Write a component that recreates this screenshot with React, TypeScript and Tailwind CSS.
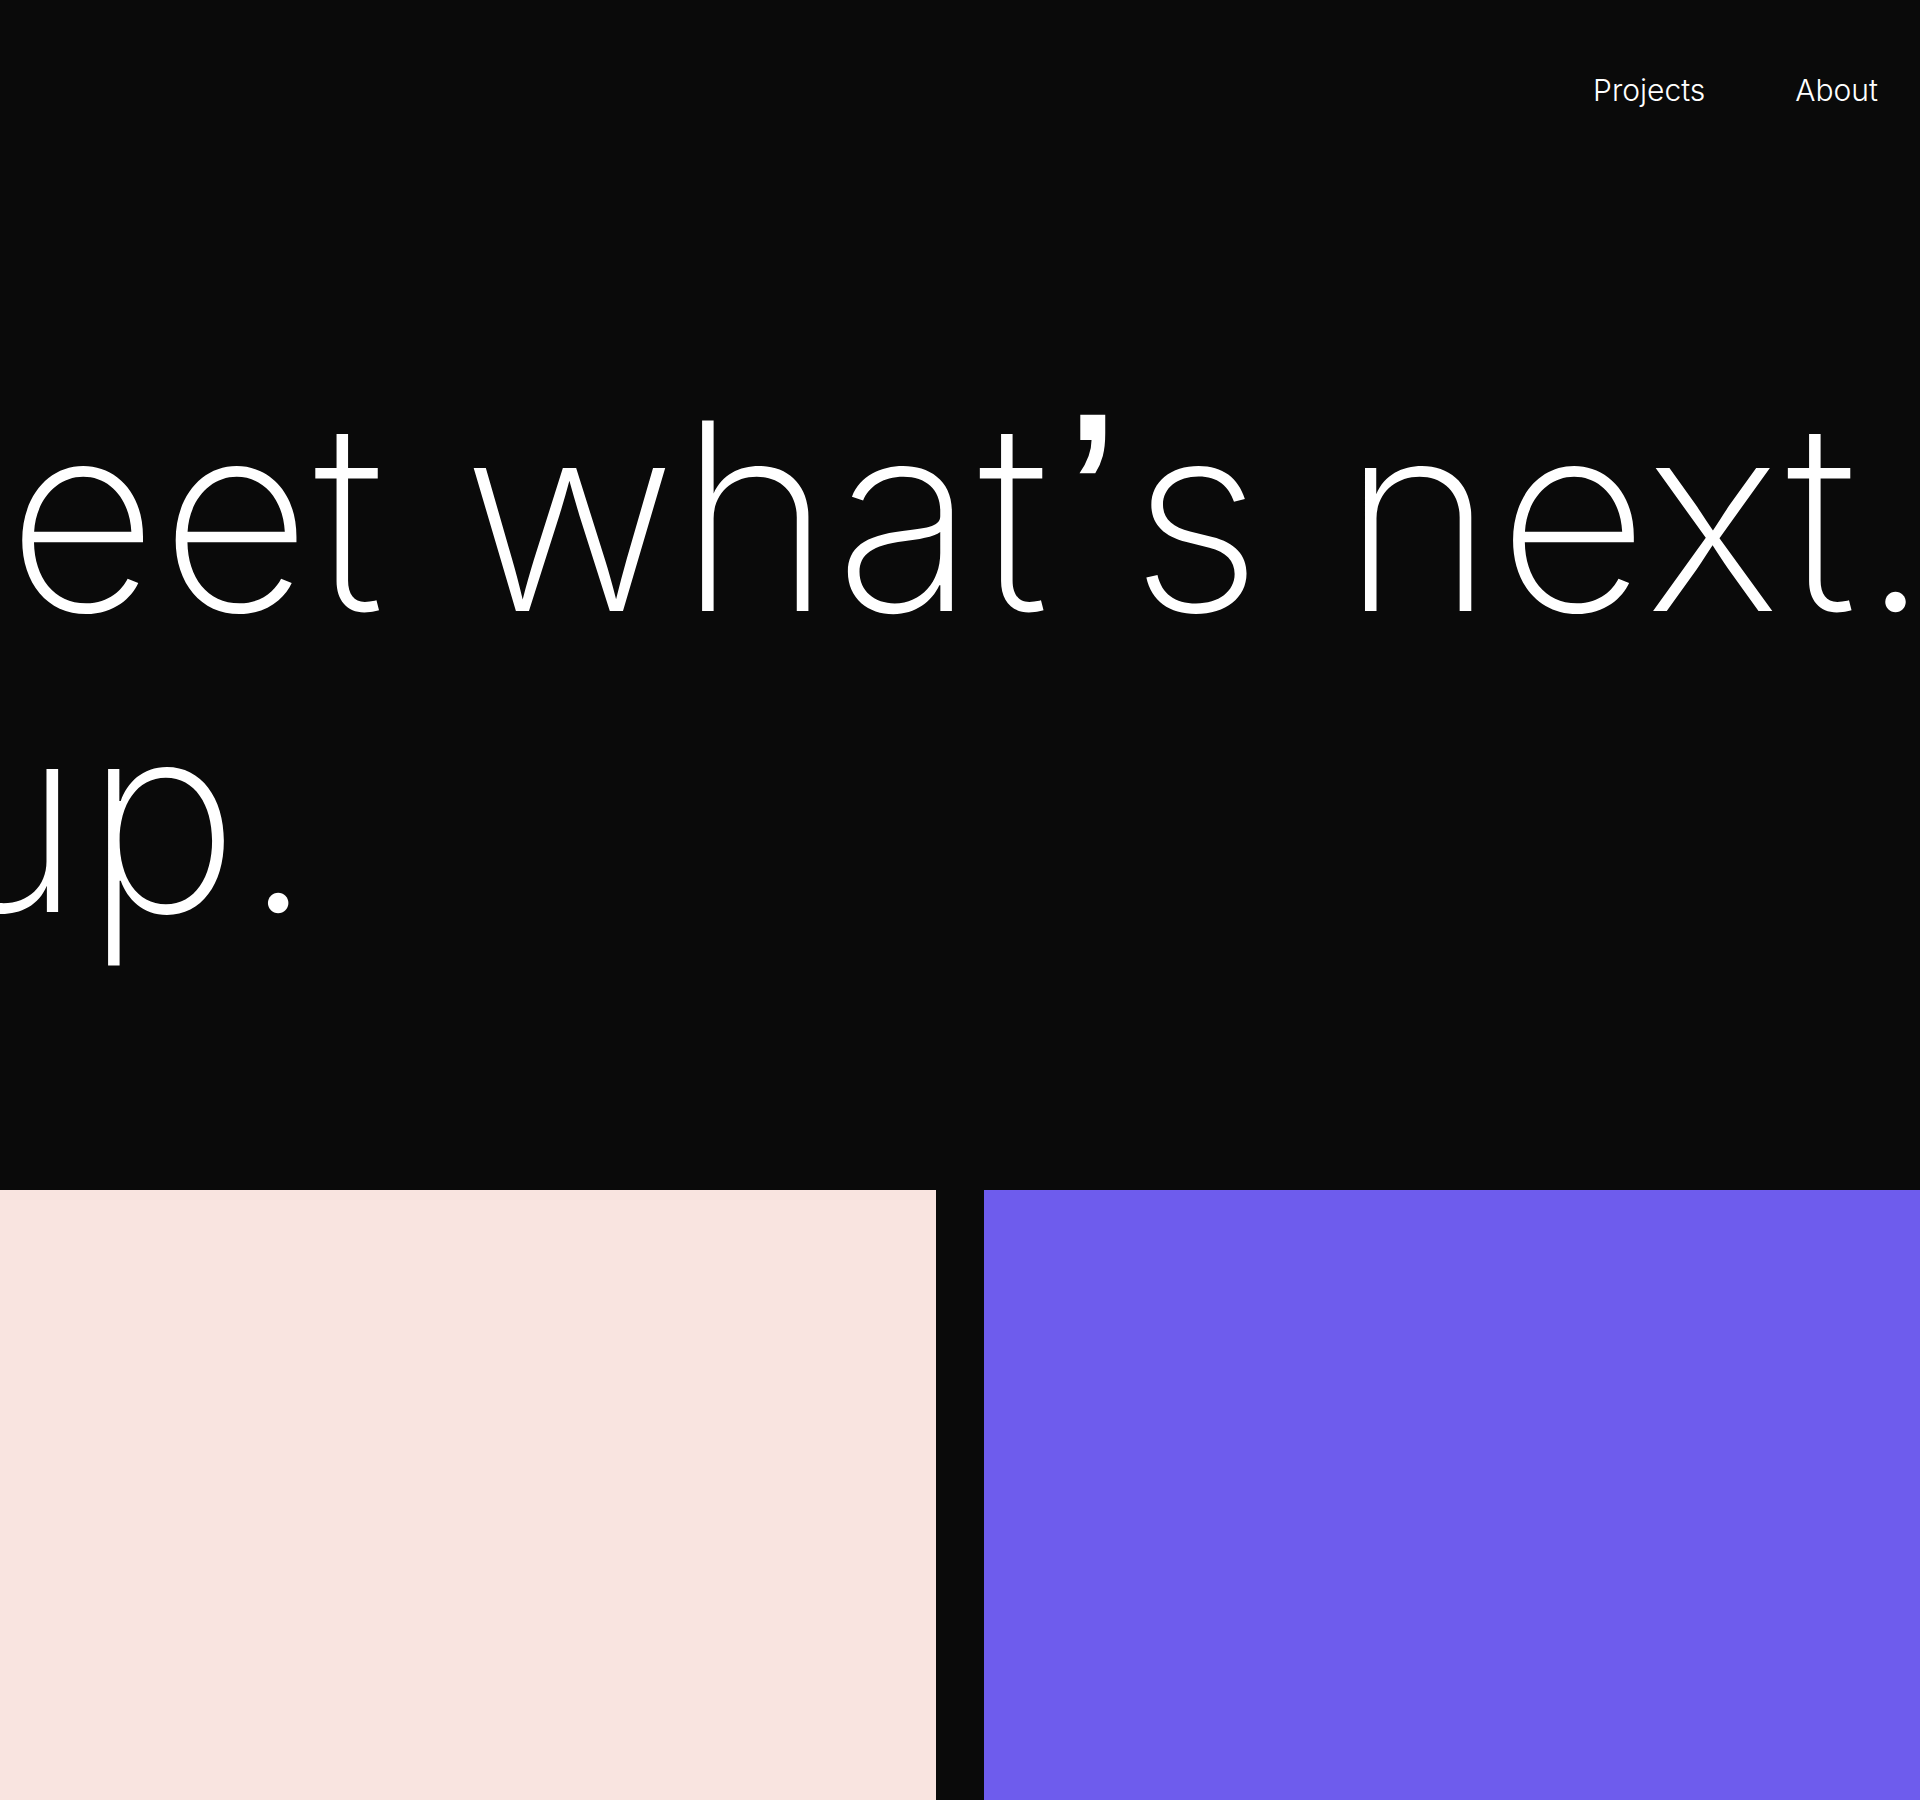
export default function App() {
  return (
    <div
      className="min-h-[1800px] overflow-hidden bg-[#0a0a0a] text-white"
      style={{ fontFamily: "Inter, 'Liberation Sans', sans-serif" }}
    >
      <header className="flex justify-end gap-[90px] px-[42px] pt-[72px] text-[30px] font-light leading-[36px]">
        <a href="#" className="text-white">Projects</a>
        <a href="#" className="text-white">About</a>
      </header>
      <h1 className="mt-[257px] whitespace-nowrap text-[262px] font-[230] leading-[301px] tracking-[0.01em]">
        <div className="ml-[-231px]">
          Meet what<span className="ml-[12px] mr-[6px] align-[16px] font-['Liberation_Sans'] font-normal leading-none">’</span>s next.
        </div>
        <div className="flex w-[317px] justify-end">
          <span>
            Let<span className="align-[16px] font-['Liberation_Sans'] font-normal leading-none">’</span>s team up.
          </span>
        </div>
      </h1>
      <div className="mt-[223px] grid h-[610px] grid-cols-2 gap-12">
        <div className="bg-[#f9e4e0]" />
        <div className="bg-[#6e5ced]" />
      </div>
    </div>
  );
}
